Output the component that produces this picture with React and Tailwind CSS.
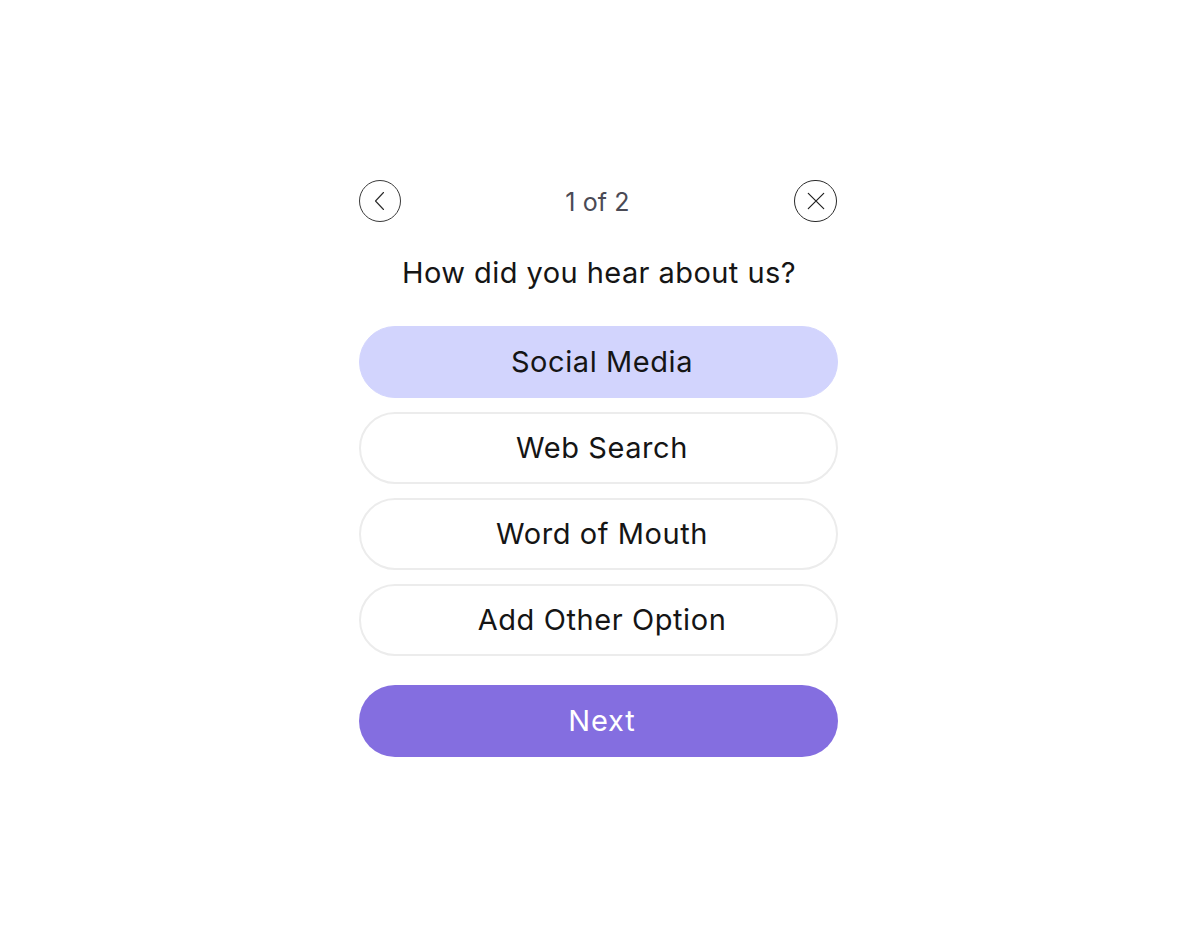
import React, { useState } from 'react';

const options = ['Social Media', 'Web Search', 'Word of Mouth', 'Add Other Option'];

const App = () => {
    const [selected, setSelected] = useState('Social Media');

    return (
        <div className="min-h-screen bg-white flex justify-center font-['Inter',sans-serif]">
            <div className="w-[479px] pt-[180px]">
                {/* Cabeçalho */}
                <div className="flex items-center justify-between h-[42px]">
                    <button className="w-[42px] h-[42px] rounded-full border border-[#3a3a3a] flex items-center justify-center">
                        <svg width="20" height="20" viewBox="0 0 20 20" fill="none">
                            <path d="M13.5 1.5 L5.5 10 L13.5 18.5" stroke="#2a2a2a" strokeWidth="1.1" strokeLinecap="round" strokeLinejoin="round" />
                        </svg>
                    </button>
                    <span className="text-[25px] leading-[32px] pt-[2px] text-[#4a4a55] tracking-[0.005em]">1 of 2</span>
                    <button className="w-[43px] h-[42px] rounded-full border border-[#2a2a2a] flex items-center justify-center">
                        <svg width="22" height="22" viewBox="0 0 22 22" fill="none">
                            <path d="M3.3 3.3 L18.7 18.7 M18.7 3.3 L3.3 18.7" stroke="#1f1f1f" strokeWidth="1.2" strokeLinecap="round" />
                        </svg>
                    </button>
                </div>

                <h2 className="mt-[33px] pl-[2px] text-center text-[29px] leading-[36px] text-[#151515] tracking-[0.015em]">
                    How did you hear about us?
                </h2>

                <div className="mt-[35px] flex flex-col gap-[14px]">
                    {options.map((opt) => (
                        <button
                            key={opt}
                            onClick={() => setSelected(opt)}
                            className={
                                selected === opt
                                    ? 'h-[72px] pl-[8px] rounded-full bg-[#d2d4fd] border border-[#d2d4fd] text-[29px] text-[#151515] tracking-[0.02em]'
                                    : 'h-[72px] pl-[8px] rounded-full bg-white border-2 border-[#ececec] text-[29px] text-[#151515] tracking-[0.02em]'
                            }
                        >
                            {opt}
                        </button>
                    ))}
                </div>

                <button className="mt-[29px] w-full h-[72px] pl-[8px] rounded-full bg-[#846ee0] text-white text-[29px] tracking-[0.03em]">
                    Next
                </button>
            </div>
        </div>
    );
};

export default App;
